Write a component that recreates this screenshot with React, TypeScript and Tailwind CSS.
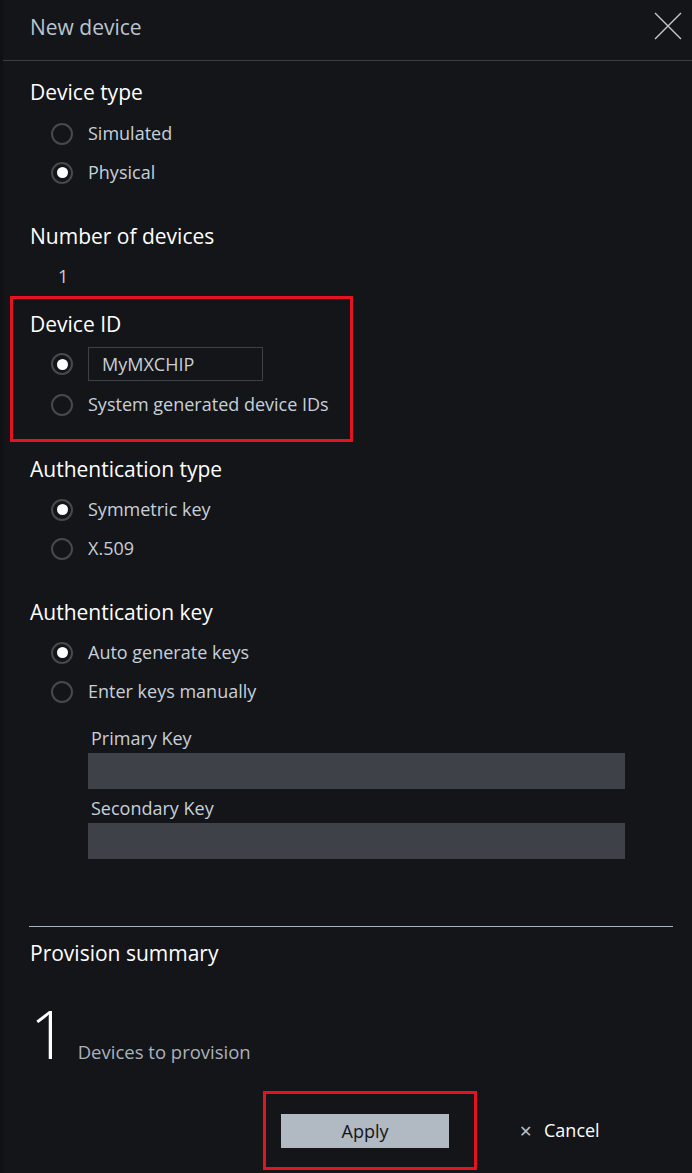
const font = { fontFamily: '"Open Sans", "Noto Sans", sans-serif' };

function Radio({ checked, label }: { checked?: boolean; label?: React.ReactNode }) {
  return (
    <div className="flex h-[39px] items-center pl-[51px]">
      <span className="flex h-[22px] w-[22px] items-center justify-center rounded-full border-2 border-[#46494e]">
        {checked && <span className="h-[11px] w-[11px] rounded-full bg-white" />}
      </span>
      <span className="ml-[15px] text-[18px] text-[#c7d0da]">{label}</span>
    </div>
  );
}

function Heading({ children }: { children: React.ReactNode }) {
  return <h3 className="text-[21px] leading-[28px] text-white">{children}</h3>;
}

export default function App() {
  return (
    <div className="min-h-[1173px] w-[692px] bg-[#141518] border-l-[3px] border-[#101114]" style={font}>
      {/* Header */}
      <div className="flex h-[61px] items-start justify-between border-b border-[#3b3d41] pl-[27px] pr-[10px] pt-[13px]">
        <h2 className="text-[21px] leading-[28px] text-[#b9c5d1]">New device</h2>
        <svg width="28" height="28" viewBox="0 0 28 28" className="-mt-[1px]">
          <path d="M1 1 L27 27 M27 1 L1 27" stroke="#c3c9cf" strokeWidth="1.4" fill="none" />
        </svg>
      </div>

      <div className="pl-[27px]">
        {/* Device type */}
        <div className="mt-[17px]">
          <Heading>Device type</Heading>
          <div className="mt-[8px] -ml-[30px]">
            <Radio label="Simulated" />
            <Radio checked label="Physical" />
          </div>
        </div>

        {/* Number of devices */}
        <div className="mt-[30px]">
          <Heading>Number of devices</Heading>
          <p className="mt-[12px] pl-[28px] text-[18px] leading-[28px] text-[#c7d0da]">1</p>
        </div>
      </div>

      {/* Device ID (highlighted) */}
      <div className="mt-[6px] ml-[7px] w-[343px] border-[3px] border-[#e5131f] pb-[15px] pt-[11px] pl-[17px]">
        <Heading>Device ID</Heading>
        <div className="mt-[6px] -ml-[30px]">
          <div className="flex h-[40px] items-center pl-[51px]">
            <span className="flex h-[22px] w-[22px] items-center justify-center rounded-full border-2 border-[#46494e]">
              <span className="h-[11px] w-[11px] rounded-full bg-white" />
            </span>
            <div className="ml-[15px] flex h-[34px] w-[175px] items-center border border-[#3e4145] pl-[13px] text-[18px] text-[#c7d0da]">
              MyMXCHIP
            </div>
          </div>
          <div className="h-[1px]" />
          <Radio label="System generated device IDs" />
        </div>
      </div>

      <div className="pl-[27px]">
        {/* Authentication type */}
        <div className="mt-[13px]">
          <Heading>Authentication type</Heading>
          <div className="mt-[7px] -ml-[30px]">
            <Radio checked label="Symmetric key" />
            <Radio label="X.509" />
          </div>
        </div>

        {/* Authentication key */}
        <div className="mt-[30px]">
          <Heading>Authentication key</Heading>
          <div className="mt-[7px] -ml-[30px]">
            <Radio checked label="Auto generate keys" />
            <Radio label="Enter keys manually" />
          </div>
          <div className="mt-[15px] pl-[58px] pr-[67px]">
            <label className="block pl-[3px] text-[18px] leading-[24px] text-[#c7d0da]">Primary Key</label>
            <div className="mt-[3px] h-[36px] bg-[#3e4147]" />
            <label className="mt-[7px] block pl-[3px] text-[18px] leading-[24px] text-[#c7d0da]">Secondary Key</label>
            <div className="mt-[3px] h-[36px] bg-[#3e4147]" />
          </div>
        </div>

        <div className="mt-[67px] -ml-[1px] mr-[19px] h-[1px] bg-[#a9b2bc]" />

        {/* Provision summary */}
        <div className="mt-[12px]">
          <Heading>Provision summary</Heading>
          <div className="mt-[31px] flex items-baseline">
            <span className="text-[66px] font-light leading-[70px] text-white">1</span>
            <span className="ml-[10px] text-[18.5px] text-[#a9b2bc]">Devices to provision</span>
          </div>
        </div>
      </div>

      {/* Footer */}
      <div className="mt-[23px] flex items-center">
        <div className="ml-[260px] w-[214px] border-[3px] border-[#e5131f] pb-[19px] pl-[15px] pt-[20px]">
          <button className="flex h-[34px] w-[168px] items-center justify-center bg-[#b1b9c3] text-[18px] text-[#141518]">
            Apply
          </button>
        </div>
        <button className="ml-[42px] flex items-center text-[18px] text-white">
          <span className="mr-[12px] text-[16px] text-[#b9c1ca]">✕</span>
          Cancel
        </button>
      </div>
    </div>
  );
}
